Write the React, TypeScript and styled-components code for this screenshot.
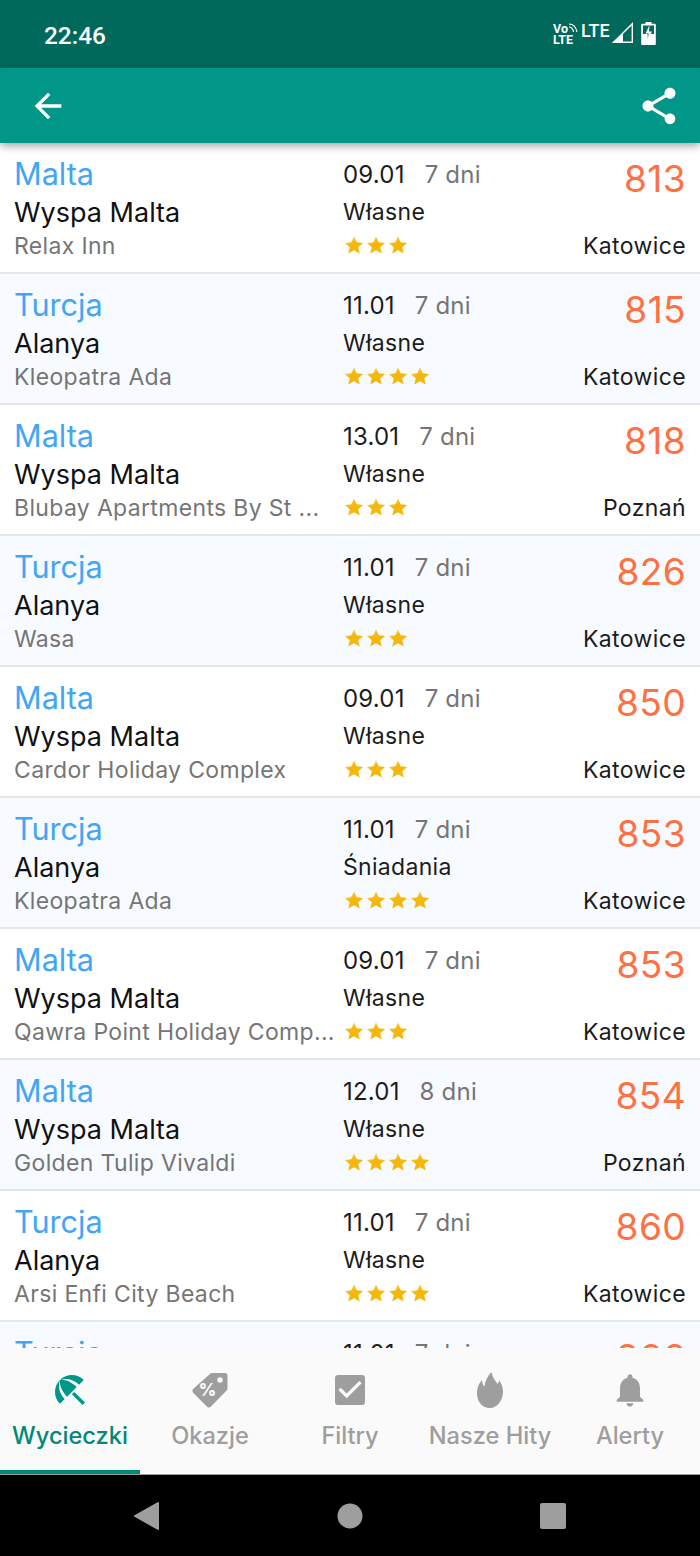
import React from 'react';
import styled, { createGlobalStyle } from 'styled-components';
import { MdArrowBack, MdShare, MdBeachAccess, MdCheckBox, MdNotifications } from 'react-icons/md';

interface Offer {
  country: string;
  region: string;
  hotel: string;
  date: string;
  days: string;
  board: string;
  stars: number;
  price: string;
  city: string;
}

const offers: Offer[] = [
  { country: 'Malta', region: 'Wyspa Malta', hotel: 'Relax Inn', date: '09.01', days: '7 dni', board: 'Własne', stars: 3, price: '813', city: 'Katowice' },
  { country: 'Turcja', region: 'Alanya', hotel: 'Kleopatra Ada', date: '11.01', days: '7 dni', board: 'Własne', stars: 4, price: '815', city: 'Katowice' },
  { country: 'Malta', region: 'Wyspa Malta', hotel: 'Blubay Apartments By St ...', date: '13.01', days: '7 dni', board: 'Własne', stars: 3, price: '818', city: 'Poznań' },
  { country: 'Turcja', region: 'Alanya', hotel: 'Wasa', date: '11.01', days: '7 dni', board: 'Własne', stars: 3, price: '826', city: 'Katowice' },
  { country: 'Malta', region: 'Wyspa Malta', hotel: 'Cardor Holiday Complex', date: '09.01', days: '7 dni', board: 'Własne', stars: 3, price: '850', city: 'Katowice' },
  { country: 'Turcja', region: 'Alanya', hotel: 'Kleopatra Ada', date: '11.01', days: '7 dni', board: 'Śniadania', stars: 4, price: '853', city: 'Katowice' },
  { country: 'Malta', region: 'Wyspa Malta', hotel: 'Qawra Point Holiday Comp...', date: '09.01', days: '7 dni', board: 'Własne', stars: 3, price: '853', city: 'Katowice' },
  { country: 'Malta', region: 'Wyspa Malta', hotel: 'Golden Tulip Vivaldi', date: '12.01', days: '8 dni', board: 'Własne', stars: 4, price: '854', city: 'Poznań' },
  { country: 'Turcja', region: 'Alanya', hotel: 'Arsi Enfi City Beach', date: '11.01', days: '7 dni', board: 'Własne', stars: 4, price: '860', city: 'Katowice' },
  { country: 'Turcja', region: 'Alanya', hotel: 'Wasa', date: '11.01', days: '7 dni', board: 'Własne', stars: 3, price: '866', city: 'Katowice' },
];

const GlobalStyle = createGlobalStyle`
  html, body {
    margin: 0;
    padding: 0;
    background: #000;
  }
  * {
    box-sizing: border-box;
  }
`;

const Screen = styled.div`
  width: 700px;
  height: 1556px;
  display: flex;
  flex-direction: column;
  overflow: hidden;
  font-family: Inter, "Liberation Sans", sans-serif;
  background: #fff;
`;

const StatusBar = styled.div`
  height: 68px;
  flex: none;
  background: #00695c;
  color: #fff;
  display: flex;
  align-items: center;
  justify-content: space-between;
  padding: 2px 44px 0 44px;
  font-family: Roboto, sans-serif;
`;

const Clock = styled.div`
  font-size: 24.4px;
  font-weight: 500;
`;

const StatusIcons = styled.div`
  display: flex;
  align-items: flex-start;
  margin-top: -3px;
`;

const Volte = styled.div`
  display: flex;
  flex-direction: column;
  font-size: 12.5px;
  font-weight: 700;
  line-height: 11px;
  width: 28px;
  padding-top: 1px;
`;

const VolteTop = styled.div`
  display: flex;
  align-items: flex-start;
`;

const LteLabel = styled.div`
  font-size: 18px;
  font-weight: 500;
  line-height: 18px;
  width: 31px;
`;

const SignalWrap = styled.div`
  width: 29px;
  height: 23px;
`;

const AppBar = styled.div`
  height: 75px;
  flex: none;
  background: #009688;
  color: #fff;
  display: flex;
  align-items: center;
  justify-content: space-between;
  padding: 0 19px 0 28px;
  box-shadow: 0 3px 8px rgba(0, 0, 0, 0.35);
  position: relative;
  z-index: 2;
`;

const List = styled.div`
  flex: 1;
  min-height: 0;
  overflow: hidden;
`;

const Row = styled.div<{ $alt: boolean }>`
  height: 131px;
  flex: none;
  display: grid;
  grid-template-columns: 330px 1fr auto;
  padding: 11px 14px 0;
  background: ${props => (props.$alt ? '#f7fbff' : '#fff')};
  border-bottom: 2px solid #e4e6e8;
`;

const Column = styled.div`
  display: flex;
  flex-direction: column;
  min-width: 0;
`;

const PriceColumn = styled(Column)`
  align-items: flex-end;
`;

const Country = styled.div`
  font-size: 30.6px;
  line-height: 40px;
  color: #42a5f5;
`;

const Region = styled.div`
  font-size: 27px;
  line-height: 36px;
  padding-top: 1px;
  height: 36px;
  color: #111;
`;

const Hotel = styled.div`
  font-size: 23px;
  line-height: 32px;
  letter-spacing: 0.34px;
  color: #757575;
  white-space: nowrap;
`;

const DateLine = styled.div`
  display: flex;
  gap: 20px;
  font-size: 24px;
  line-height: 38px;
  padding-top: 2px;
  height: 38px;
  letter-spacing: 0.2px;
  color: #1c1c1c;
  margin-left: -1px;
`;

const Days = styled.span`
  color: #757575;
`;

const Board = styled.div`
  font-size: 23px;
  line-height: 36px;
  padding-top: 2px;
  height: 36px;
  letter-spacing: 0.3px;
  color: #1c1c1c;
  margin-left: -1px;
`;

const Stars = styled.div`
  display: flex;
  height: 32px;
  align-items: center;
  padding-top: 2px;
  margin-left: -1px;
`;

const Price = styled.div`
  font-size: 37px;
  line-height: 50px;
  letter-spacing: 0.4px;
  color: #ff7043;
`;

const City = styled.div`
  font-size: 23px;
  line-height: 32px;
  letter-spacing: 0.38px;
  margin-top: 26px;
  color: #1c1c1c;
`;

const TabBar = styled.div`
  height: 127px;
  flex: none;
  background: #fafafa;
  display: grid;
  grid-template-columns: repeat(5, 1fr);
  border-bottom: 1px solid #9e9e9e;
  position: relative;
`;

const Tab = styled.div<{ $active?: boolean }>`
  display: flex;
  flex-direction: column;
  align-items: center;
  padding-top: 22px;
  color: ${props => (props.$active ? '#00897b' : '#9e9e9e')};
  border-bottom: 4px solid ${props => (props.$active ? '#00897b' : 'transparent')};
  font-size: 23.6px;
  font-weight: 500;
`;

const TabIcon = styled.div<{ $active?: boolean }>`
  height: 40px;
  display: flex;
  align-items: center;
  justify-content: center;
  color: ${props => (props.$active ? '#009688' : '#9e9e9e')};
`;

const TabLabel = styled.div`
  margin-top: 8px;
  line-height: 36px;
  white-space: nowrap;
`;

const NavBar = styled.div`
  height: 81px;
  flex: none;
  background: #000;
  display: grid;
  grid-template-columns: 1fr 1fr 1fr;
  align-items: center;
  justify-items: center;
  padding: 0 46px;
`;

const StarIcon = () => (
  <svg width="22" height="22" viewBox="0 0 24 24">
    <defs>
      <linearGradient id="starFill" x1="0.2" y1="0" x2="0.6" y2="0.7">
        <stop offset="0" stopColor="#fbe08a" />
        <stop offset="0.55" stopColor="#f4b70c" />
      </linearGradient>
    </defs>
    <path fill="url(#starFill)" d="M12 2.500l2.900 6.500 7.100.7-5.400 4.700 1.700 7-6.300-3.700-6.300 3.700 1.700-7L2 9.700l7.100-.7z" />
  </svg>
);

const WifiArcs = () => (
  <svg width="10" height="10" viewBox="0 0 10 10" fill="none" stroke="#fff" strokeWidth="1.200">
    <path d="M1 1c4 0 7 3 8 8" />
    <path d="M1 4c2 0 4 2 4.500 5" />
  </svg>
);

const SignalIcon = () => (
  <svg width="21" height="21" viewBox="0 0 21 21">
    <path fill="none" stroke="#fff" strokeWidth="1.400" d="M20.300 1.700v18.600H1.700z" />
    <path fill="#fff" d="M11 11v10H0z" />
  </svg>
);

const BatteryIcon = () => (
  <svg width="15" height="23" viewBox="0 0 15 23">
    <path fill="#fff" d="M4.500 0h6v1.800h3.300a1 1 0 0 1 1 1V22a1 1 0 0 1-1 1H1.200a1 1 0 0 1-1-1V2.800a1 1 0 0 1 1-1h3.300z" />
    <path fill="#00695c" d="M2 3.500h11V12H2z" />
    <path fill="#fff" d="M8.500 3 4.500 11.500h2.800L6.300 19l4.700-9.500H8z" />
    <path fill="#00695c" d="M8.200 11.500 6.600 17l-.3-5.500z" opacity="0.6" />
  </svg>
);

const TagIcon = () => (
  <svg width="36" height="36" viewBox="0 0 36 36">
    <path fill="#9e9e9e" d="M20 1h13a2.500 2.500 0 0 1 2.500 2.500v13a3 3 0 0 1-.9 2.100L19 34.500a3 3 0 0 1-4.200 0L1.400 21a3 3 0 0 1 0-4.200L17.900 1.900A3 3 0 0 1 20 1z" />
    <circle cx="28" cy="8" r="2.700" fill="#fafafa" />
    <text x="15.500" y="24" fontSize="17" fontWeight="800" fontFamily="Inter, sans-serif" textAnchor="middle" fill="#fafafa">%</text>
  </svg>
);

const FlameIcon = () => (
  <svg width="26" height="36" viewBox="0 0 26 36">
    <path fill="#9e9e9e" d="M14.500 0c1 5.500 3.500 8 6 12 .8-1 1.300-2 1.500-3.500 2.500 3 4 6.500 4 11 0 8.500-5.500 16.500-13 16.500S0 30 0 21.500C0 15 2 11.500 5 8c0 3 .8 5 2.500 6.500C8 9 10.500 4 14.500 0z" />
  </svg>
);

const App: React.FC = () => {
  return (
    <Screen>
      <GlobalStyle />
      <StatusBar>
        <Clock>22:46</Clock>
        <StatusIcons>
          <Volte>
            <VolteTop>
              <span>Vo</span>
              <WifiArcs />
            </VolteTop>
            <span>LTE</span>
          </Volte>
          <LteLabel>LTE</LteLabel>
          <SignalWrap>
            <SignalIcon />
          </SignalWrap>
          <BatteryIcon />
        </StatusIcons>
      </StatusBar>
      <AppBar>
        <MdArrowBack size={40} />
        <MdShare size={44} />
      </AppBar>
      <List>
        {offers.map((offer, i) => (
          <Row key={i} $alt={i % 2 === 1}>
            <Column>
              <Country>{offer.country}</Country>
              <Region>{offer.region}</Region>
              <Hotel>{offer.hotel}</Hotel>
            </Column>
            <Column>
              <DateLine>
                <span>{offer.date}</span>
                <Days>{offer.days}</Days>
              </DateLine>
              <Board>{offer.board}</Board>
              <Stars>
                {Array.from({ length: offer.stars }).map((_, s) => (
                  <StarIcon key={s} />
                ))}
              </Stars>
            </Column>
            <PriceColumn>
              <Price>{offer.price}</Price>
              <City>{offer.city}</City>
            </PriceColumn>
          </Row>
        ))}
      </List>
      <TabBar>
        <Tab $active>
          <TabIcon $active><MdBeachAccess size={40} /></TabIcon>
          <TabLabel>Wycieczki</TabLabel>
        </Tab>
        <Tab>
          <TabIcon><TagIcon /></TabIcon>
          <TabLabel>Okazje</TabLabel>
        </Tab>
        <Tab>
          <TabIcon><MdCheckBox size={40} /></TabIcon>
          <TabLabel>Filtry</TabLabel>
        </Tab>
        <Tab>
          <TabIcon><FlameIcon /></TabIcon>
          <TabLabel>Nasze Hity</TabLabel>
        </Tab>
        <Tab>
          <TabIcon><MdNotifications size={40} /></TabIcon>
          <TabLabel>Alerty</TabLabel>
        </Tab>
      </TabBar>
      <NavBar>
        <svg width="26" height="30" viewBox="0 0 26 30"><path fill="#9e9e9e" d="M25 2v26a1 1 0 0 1-1.500.800L1 16a1 1 0 0 1 0-2L23.500 1.200A1 1 0 0 1 25 2z" /></svg>
        <svg width="26" height="26" viewBox="0 0 26 26"><circle cx="13" cy="13" r="12.500" fill="#9e9e9e" /></svg>
        <svg width="26" height="26" viewBox="0 0 26 26"><rect width="26" height="26" rx="2" fill="#9e9e9e" /></svg>
      </NavBar>
    </Screen>
  );
};

export default App;
